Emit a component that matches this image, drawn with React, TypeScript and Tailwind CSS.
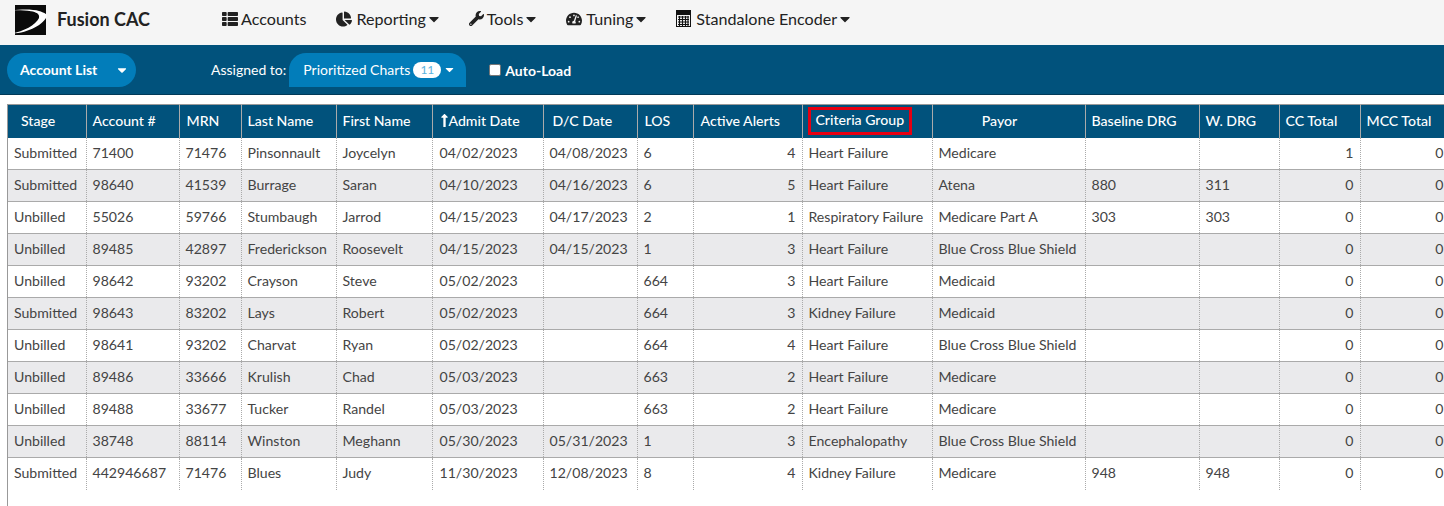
import React from "react";
import { FaThList, FaChartPie, FaWrench, FaTachometerAlt, FaCaretDown, FaLongArrowAltUp } from "react-icons/fa";

const widths = [78, 93, 62, 95, 96, 111, 94, 56, 109, 130, 153, 114, 80, 81, 90];
const heads = ["Stage", "Account #", "MRN", "Last Name", "First Name", "Admit Date", "D/C Date", "LOS", "Active Alerts", "Criteria Group", "Payor", "Baseline DRG", "W. DRG", "CC Total", "MCC Total"];
const rows = [
  ["Submitted", "71400", "71476", "Pinsonnault", "Joycelyn", "04/02/2023", "04/08/2023", "6", "4", "Heart Failure", "Medicare", "", "", "1", "0"],
  ["Submitted", "98640", "41539", "Burrage", "Saran", "04/10/2023", "04/16/2023", "6", "5", "Heart Failure", "Atena", "880", "311", "0", "0"],
  ["Unbilled", "55026", "59766", "Stumbaugh", "Jarrod", "04/15/2023", "04/17/2023", "2", "1", "Respiratory Failure", "Medicare Part A", "303", "303", "0", "0"],
  ["Unbilled", "89485", "42897", "Frederickson", "Roosevelt", "04/15/2023", "04/15/2023", "1", "3", "Heart Failure", "Blue Cross Blue Shield", "", "", "0", "0"],
  ["Unbilled", "98642", "93202", "Crayson", "Steve", "05/02/2023", "", "664", "3", "Heart Failure", "Medicaid", "", "", "0", "0"],
  ["Submitted", "98643", "83202", "Lays", "Robert", "05/02/2023", "", "664", "3", "Kidney Failure", "Medicaid", "", "", "0", "0"],
  ["Unbilled", "98641", "93202", "Charvat", "Ryan", "05/02/2023", "", "664", "4", "Heart Failure", "Blue Cross Blue Shield", "", "", "0", "0"],
  ["Unbilled", "89486", "33666", "Krulish", "Chad", "05/03/2023", "", "663", "2", "Heart Failure", "Medicare", "", "", "0", "0"],
  ["Unbilled", "89488", "33677", "Tucker", "Randel", "05/03/2023", "", "663", "2", "Heart Failure", "Medicare", "", "", "0", "0"],
  ["Unbilled", "38748", "88114", "Winston", "Meghann", "05/30/2023", "05/31/2023", "1", "3", "Encephalopathy", "Blue Cross Blue Shield", "", "", "0", "0"],
  ["Submitted", "442946687", "71476", "Blues", "Judy", "11/30/2023", "12/08/2023", "8", "4", "Kidney Failure", "Medicare", "948", "948", "0", "0"],
];
const rightAligned = new Set([8, 13, 14]);

function Calc() {
  return (
    <svg width="15" height="17" viewBox="0 0 15 17" className="shrink-0">
      <rect x="0.5" y="0.5" width="14" height="16" fill="none" stroke="#111" />
      <rect x="0" y="0" width="15" height="5" fill="#111" />
      <path d="M2 7h11M2 9.5h11M2 12h11M2 14.5h11M3.5 6v10M6.5 6v10M9.5 6v10M12 6v10" stroke="#111" strokeWidth="1.1" fill="none" />
    </svg>
  );
}

function Logo() {
  return (
    <svg width="36" height="30" viewBox="0 0 36 30" className="shrink-0">
      <rect x="4" y="0" width="31" height="30" fill="#0b0b0b" />
      <path d="M1 5.5 C10 4 22 4 28 6 C33 7.5 36 9 36 11 C33 19 18 28 1 28.5 C12 26.5 25 20 28 13 C29 9 25 7 20 6.3 C14 5.5 7 5 1 5.5Z" fill="#fff" />
    </svg>
  );
}

function Nav({ icon, label, caret, gap }: { icon: React.ReactNode; label: string; caret?: boolean; gap: string }) {
  return (
    <div className="flex items-center text-[#222] text-[16.1px] ml-[30px]">
      {icon}
      <span className={gap}>{label}</span>
      {caret && <FaCaretDown className="mr-[-3px] text-[16px]" />}
    </div>
  );
}

export default function App() {
  return (
    <div className="w-[1444px] h-[506px] overflow-hidden bg-white font-['Lato','Liberation_Sans',sans-serif]">
      <header className="h-[45px] bg-[#f5f5f5] flex items-center">
        <div className="ml-[11px] mt-[-5px]"><Logo /></div>
        <span className="ml-[10px] mt-[-6px] text-[18px] font-bold text-[#222] w-[135px] whitespace-nowrap">Fusion CAC</span>
        <div className="flex items-center mt-[-7px]">
          <Nav gap="ml-[3px]" icon={<FaThList className="text-[16px]" />} label="Accounts" />
          <Nav gap="ml-[4px]" icon={<FaChartPie className="text-[16px]" />} label="Reporting" caret />
          <Nav gap="ml-[3px]" icon={<FaWrench className="text-[15px]" />} label="Tools" caret />
          <Nav gap="ml-[4px]" icon={<FaTachometerAlt className="text-[16px]" />} label="Tuning" caret />
          <Nav gap="ml-[5px]" icon={<Calc />} label="Standalone Encoder" caret />
        </div>
      </header>
      <div className="h-[50px] bg-[#01527c] border-b border-[#013a58] flex items-center text-white">
        <div className="ml-[7px] w-[129px] h-[34px] rounded-[17px] bg-[#027dba] flex items-center text-[14px] font-bold">
          <span className="ml-[13px]">Account List</span>
          <FaCaretDown className="ml-[18px] text-[14px]" />
        </div>
        <span className="ml-[75px] text-[14px]">Assigned to:</span>
        <div className="ml-[3px] w-[177px] h-[34px] rounded-t-[17px] bg-[#027dba] flex items-center text-[14px]">
          <span className="ml-[14px]">Prioritized Charts</span>
          <span className="ml-[3px] w-[28px] h-[16px] rounded-full bg-white text-[#5bb2dd] text-[12px] flex items-center justify-center">11</span>
          <FaCaretDown className="ml-[2px] text-[13px]" />
        </div>
        <div className="ml-[23px] flex items-center">
          <span className="w-[12px] h-[12px] bg-white rounded-[2px] border border-[#777]" />
          <span className="ml-[4px] text-[14px] font-bold mt-[1px]">Auto-Load</span>
        </div>
      </div>
      <div className="pt-[9px] pl-[7px]">
        <div className="border-l border-[#999] h-[420px]">
          <table className="table-fixed border-collapse text-[14.1px] w-[1442px]">
            <colgroup>
              {widths.map((w, i) => <col key={i} style={{ width: w }} />)}
            </colgroup>
            <thead>
              <tr className="h-[33px] bg-[#01527c] text-white border-t border-[#999]">
                {heads.map((h, i) => {
                  const base = "font-medium border-r border-[#aaa] pb-[2px] whitespace-nowrap";
                  if (i === 9) {
                    return (
                      <th key={i} className="font-medium border-r border-[#aaa] px-[5px] whitespace-nowrap text-left">
                        <span className="inline-block border-[3px] border-[#e60012] pl-[5px] pr-[5px] h-[28px] leading-[20px] w-[104px] font-medium">{h}</span>
                      </th>
                    );
                  }
                  if (i === 5) {
                    return (
                      <th key={i} className={`${base} pl-[6px] pr-[6px] text-left`}>
                        <span className="flex items-center"><FaLongArrowAltUp className="text-[15px] ml-[-2px] mr-[-3px]" />{h}</span>
                      </th>
                    );
                  }
                  if (i === 10) return <th key={i} className={`${base} pl-[6px] pr-[24px] text-center`}>{h}</th>;
                  if (i === 6) return <th key={i} className={`${base} pl-[9px] pr-[6px] text-left`}>{h}</th>;
                  if (i === 0) return <th key={i} className={`${base} pl-[13px] pr-[6px] text-left`}>{h}</th>;
                  if (i === 2 || i === 7 || i === 8) return <th key={i} className={`${base} pl-[7px] pr-[6px] text-left`}>{h}</th>;
                  return <th key={i} className={`${base} pl-[6px] pr-[6px] text-left`}>{h}</th>;
                })}
              </tr>
            </thead>
            <tbody>
              {rows.map((r, ri) => (
                <tr key={ri} className={`h-[32px] text-[#444] ${ri % 2 ? "bg-[#eaeaec]" : "bg-white"} ${ri < rows.length - 1 ? "border-b border-[#aaa]" : ""}`}>
                  {r.map((c, i) => (
                    <td key={i} className={`border-r border-dotted border-[#aaa] ${i === 5 ? "pl-[7px]" : "pl-[6px]"} pr-[6px] pb-[2px] whitespace-nowrap ${rightAligned.has(i) ? "text-right" : "text-left"}`}>{c}</td>
                  ))}
                </tr>
              ))}
            </tbody>
          </table>
        </div>
      </div>
    </div>
  );
}
